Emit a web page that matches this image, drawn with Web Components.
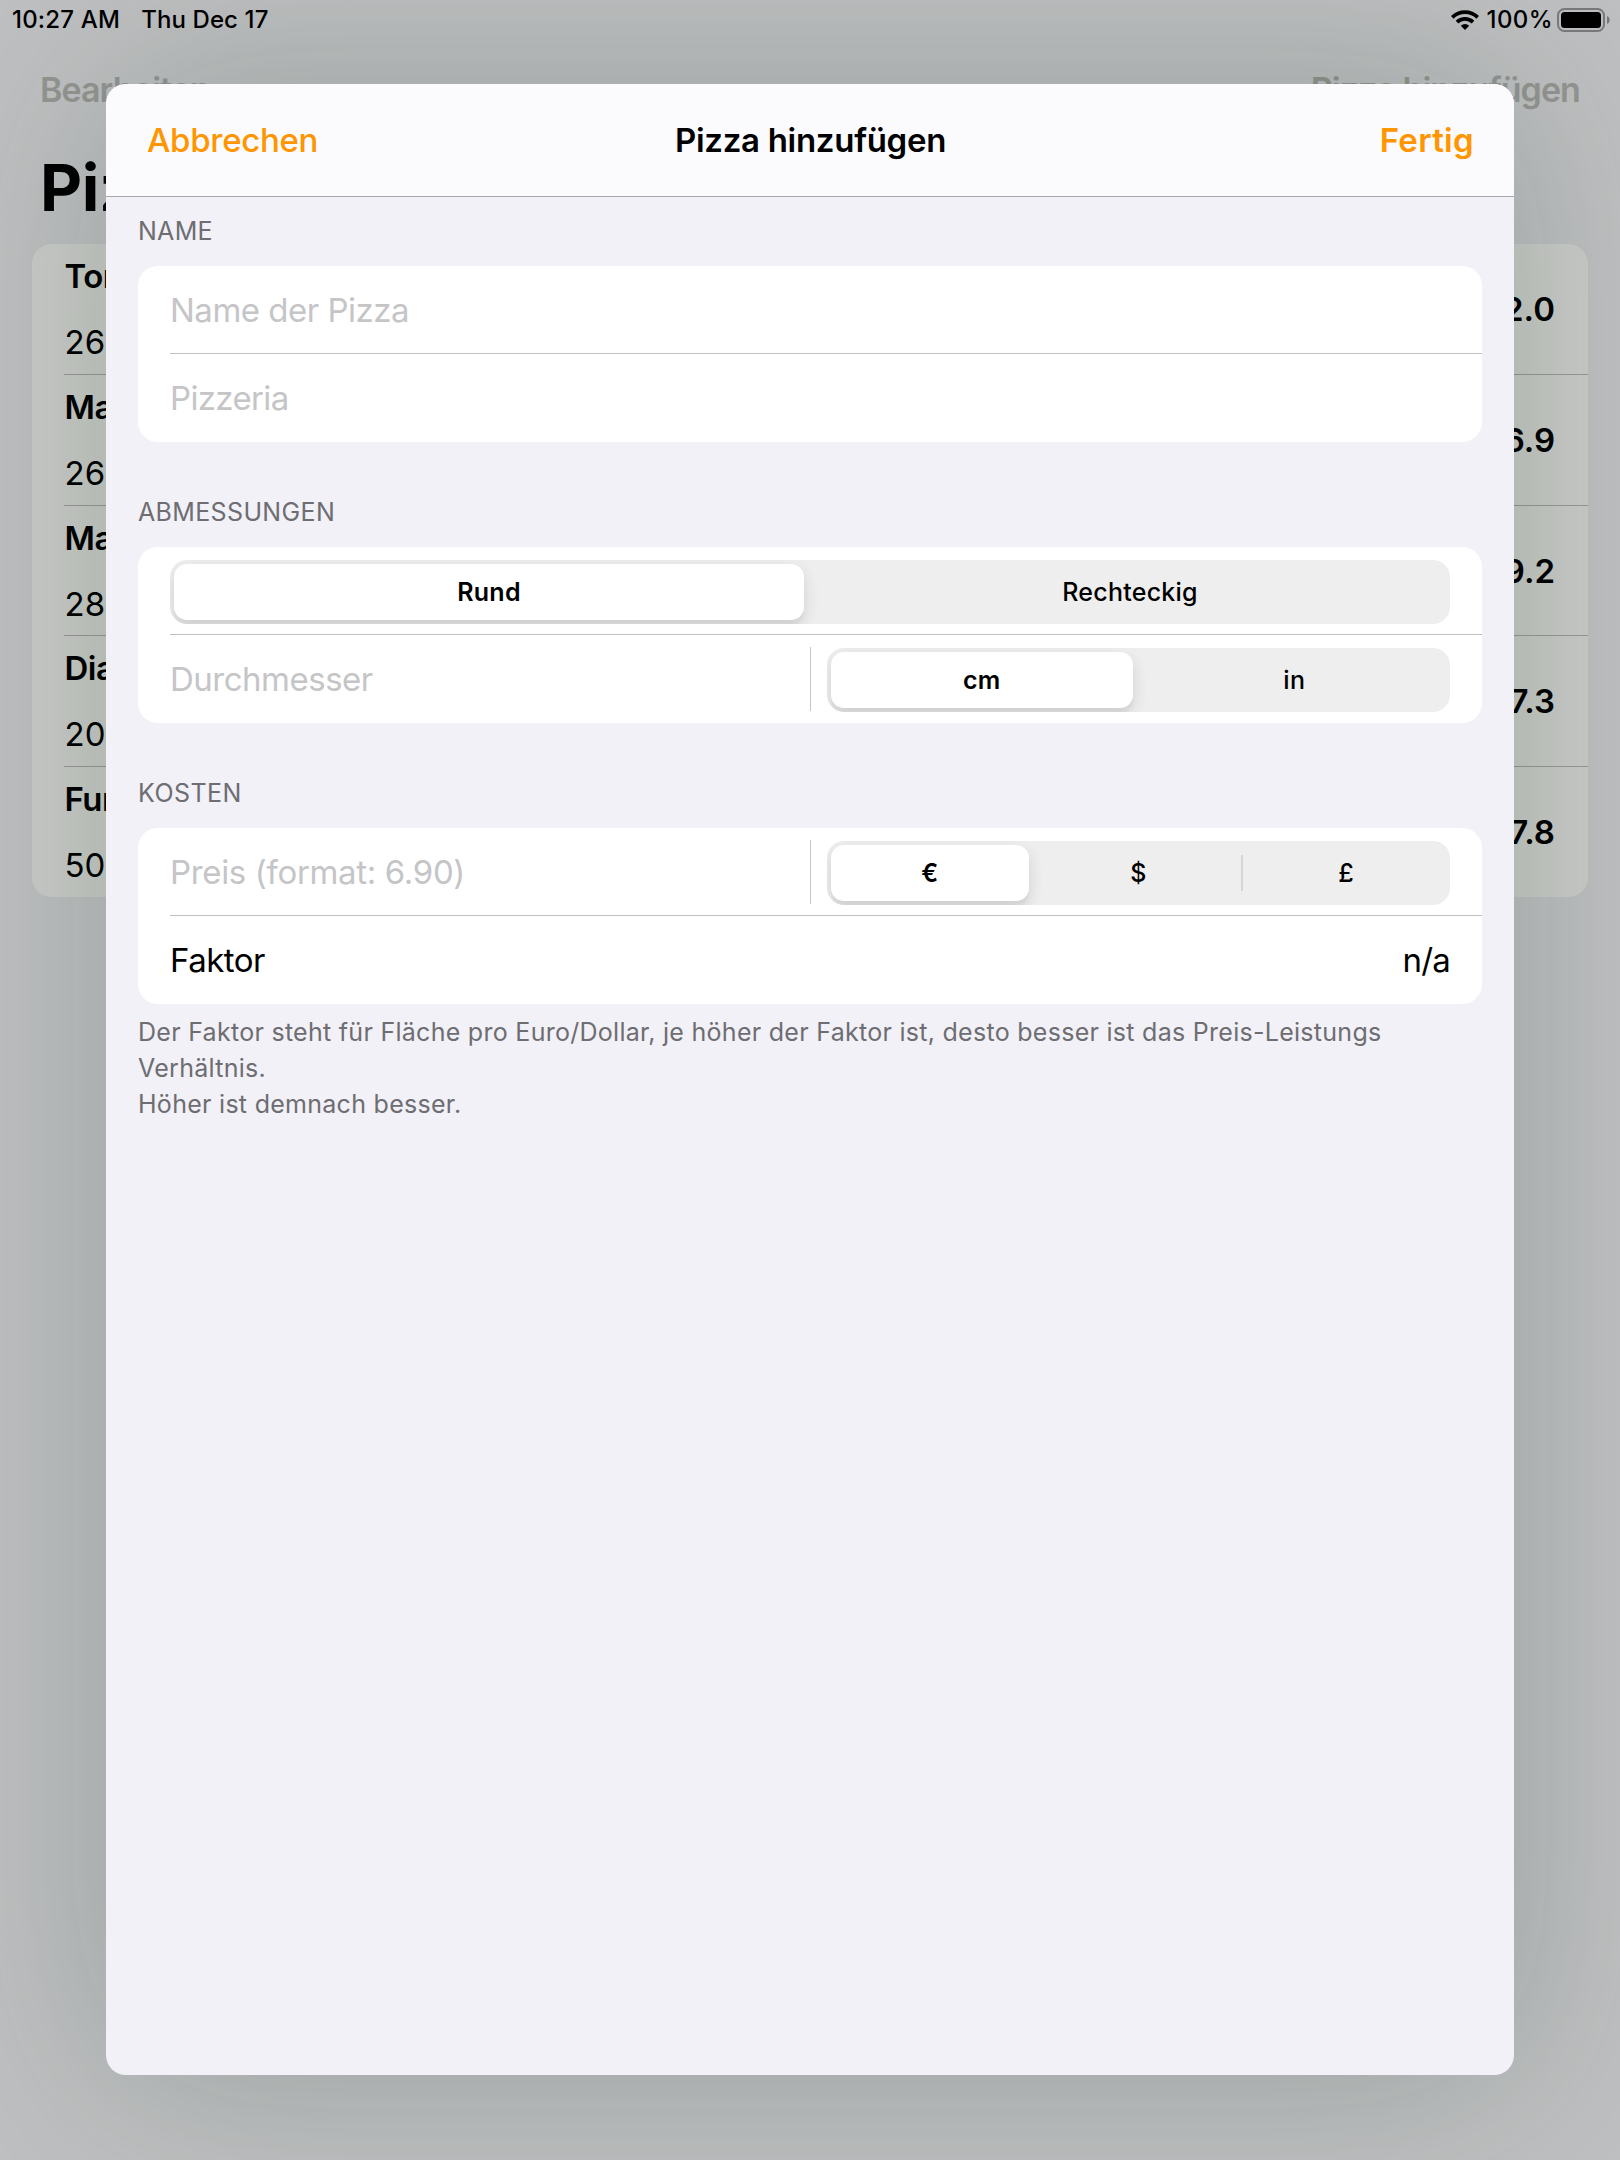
<!DOCTYPE html>
<html lang="de">
<head>
<meta charset="utf-8">
<title>Pizza hinzufügen</title>
<style>
html, body { margin: 0; height: 100%; }
body { font-family: Inter, "Liberation Sans", sans-serif; color: #000; overflow: hidden; }
</style>
</head>
<body>
<pizza-app></pizza-app>
<script>
const define = (name, html) => {
  const tpl = document.createElement('template');
  tpl.innerHTML = html;
  customElements.define(name, class extends HTMLElement {
    constructor() {
      super();
      this.attachShadow({ mode: 'open' }).append(tpl.content.cloneNode(true));
    }
  });
};

define('status-bar', `
<style>
:host { display: flex; align-items: center; height: 39px; padding: 0 10px 0 12px; font-size: 24px; font-weight: 500; line-height: 39px; letter-spacing: .2px; white-space: pre; }
.date { margin-left: 21px; flex: 1; letter-spacing: .1px; }
.wifi { width: 28px; height: 20px; margin-right: 8px; }
.pct { letter-spacing: .4px; }
.bat { width: 53px; height: 24px; margin: 1px 0 0 4px; }
</style>
<span>10:27 AM</span><span class="date">Thu Dec 17</span>
<svg class="wifi" viewBox="0 0 28 20">
  <g fill="none" stroke="#000" stroke-width="3.7">
    <path d="M1.3 7.3a18.2 18.2 0 0 1 25.4 0"/>
    <path d="M6 12.2a11.5 11.5 0 0 1 16 0"/>
  </g>
  <path d="M14 20l-4.2-4.3a6 6 0 0 1 8.4 0z"/>
</svg>
<span class="pct">100%</span>
<svg class="bat" viewBox="0 0 53 24">
  <rect x="1" y="1" width="46" height="22" rx="6.5" fill="none" stroke="#77787a" stroke-width="2"/>
  <rect x="4" y="4" width="40" height="16" rx="3.5"/>
  <path d="M50 8c3.6 1.2 3.6 6.8 0 8z" fill="#77787a"/>
</svg>`);

define('list-row', `
<style>
:host { display: flex; box-sizing: border-box; height: var(--h, 131px); margin-left: 32px; padding-right: 33px; border-bottom: 1px solid var(--line, #999a97); font-size: 33px; justify-content: space-between; align-items: flex-start; }
.t { font-weight: 600; line-height: 65px; letter-spacing: -.5px; padding-left: .5px; }
.s { line-height: 66px; padding-left: .5px; }
.v { font-weight: 600; line-height: 130px; }
</style>
<div><div class="t"><slot></slot></div><div class="s"><slot name="size"></slot></div></div>
<div class="v"><slot name="value"></slot></div>`);

define('pizza-list', `
<style>
:host { display: flow-root; height: 2160px; background: #bfc0c2; }
.nav { display: flex; justify-content: space-between; height: 103px; line-height: 103px; padding: 0 40px; margin-top: 38px; font-size: 34px; font-weight: 600; color: #949592; letter-spacing: -.93px; }
h1 { margin: 0 0 9px; padding-left: 40px; height: 94px; line-height: 94px; font-size: 65px; font-weight: 700; letter-spacing: -.3px; }
.card { margin: 0 32px; border-radius: 20px; background: #cbccc9; }
</style>
<div class="nav"><span>Bearbeiten</span><span>Pizza hinzufügen</span></div>
<h1>Piz</h1>
<div class="card">
  <list-row>Ton<span slot="size">26</span><span slot="value">2.0</span></list-row>
  <list-row>Ma<span slot="size">26</span><span slot="value">6.9</span></list-row>
  <list-row style="--h:130px">Ma<span slot="size">28</span><span slot="value">9.2</span></list-row>
  <list-row>Dia<span slot="size">20</span><span slot="value">7.3</span></list-row>
  <list-row style="--line:transparent;--h:130px">Fun<span slot="size">50</span><span slot="value">7.8</span></list-row>
</div>`);

define('form-section', `
<style>
:host { display: block; margin-bottom: 42px; color: #6d6d72; font-size: 25px; line-height: 36px; letter-spacing: .28px; }
.head { height: 36px; margin-bottom: 17px; }
.card { border-radius: 20px; background: #fff; overflow: hidden; color: #000; }
.foot { padding-top: 10px; }
</style>
<div class="head"><slot name="head"></slot></div>
<div class="card"><slot></slot></div>
<div class="foot"><slot name="foot"></slot></div>`);

define('form-row', `
<style>
:host { display: flex; box-sizing: border-box; height: 88px; margin-left: 32px; padding-right: 32px; gap: 16px; border-bottom: 1px solid #c0c0c2; font-size: 33px; line-height: 88px; letter-spacing: -.5px; align-items: flex-start; justify-content: space-between; }
:host([last]) { border-bottom: 0; }
</style>
<slot></slot>`);

define('place-holder', `
<style>:host { display: block; flex: 1; color: #c5c5c7; }</style><slot></slot>`);

define('v-rule', `
<style>:host { display: block; width: 1px; height: 64px; margin-top: 12px; background: #c6c6c8; }</style>`);

define('seg-control', `
<style>
:host { display: flex; flex: none; width: 623px; height: 64px; margin-top: 13px; border-radius: 17px; background: #eeeeee; overflow: hidden; }
:host([wide]) { width: 1280px; }
::slotted(*) { flex: 1 1 0; }
</style>
<slot></slot>`);

define('seg-item', `
<style>
:host { display: flow-root; height: 64px; text-align: center; font-size: 25px; font-weight: 500; line-height: 64px; letter-spacing: .25px; }
:host([on]) { font-weight: 600; }
:host([on]) div { margin: 4px 6px 4px 4px; background: #fff; border-radius: 13px; line-height: 56px; box-shadow: 0 6px 16px rgba(0,0,0,.12), 0 6px 2px rgba(0,0,0,.03); }
:host([rule]) div { background: linear-gradient(#d5d5d6, #d5d5d6) 0 50% / 2px 36px no-repeat; margin-left: -1px; padding-left: 1px; }
</style>
<div><slot></slot></div>`);

define('modal-sheet', `
<style>
:host { display: block; width: 1408px; height: 1991px; border-radius: 20px; background: #f2f1f7; box-shadow: 0 0 200px rgba(0,40,20,.21); overflow: hidden; }
.nav { display: grid; grid-template-columns: 1fr auto 1fr; align-items: center; box-sizing: border-box; height: 113px; padding: 0 40px 0 41px; background: #fbfbfd; border-bottom: 1px solid #a9a9ad; font-size: 33px; line-height: 40px; font-weight: 600; letter-spacing: -.29px; }
.a { color: #ff9500; font-weight: 500; letter-spacing: -.3px; }
.b { color: #ff9500; text-align: right; letter-spacing: .3px; }
.body { padding: 16px 32px; }
</style>
<div class="nav"><span class="a">Abbrechen</span><span>Pizza hinzufügen</span><span class="b">Fertig</span></div>
<div class="body">
  <form-section>
    <span slot="head">NAME</span>
    <form-row><place-holder>Name der Pizza</place-holder></form-row>
    <form-row last><place-holder style="letter-spacing:-.65px">Pizzeria</place-holder></form-row>
  </form-section>
  <form-section>
    <span slot="head" style="letter-spacing:.35px">ABMESSUNGEN</span>
    <form-row><seg-control wide><seg-item on>Rund</seg-item><seg-item>Rechteckig</seg-item></seg-control></form-row>
    <form-row last><place-holder>Durchmesser</place-holder><v-rule></v-rule><seg-control><seg-item on>cm</seg-item><seg-item>in</seg-item></seg-control></form-row>
  </form-section>
  <form-section>
    <span slot="head" style="letter-spacing:.45px">KOSTEN</span>
    <form-row><place-holder style="letter-spacing:-.34px">Preis (format: 6.90)</place-holder><v-rule></v-rule><seg-control><seg-item on>€</seg-item><seg-item>$</seg-item><seg-item rule>£</seg-item></seg-control></form-row>
    <form-row last><span style="letter-spacing:-.5px">Faktor</span><span style="letter-spacing:-.8px">n/a</span></form-row>
    <span slot="foot">Der Faktor steht für Fläche pro Euro/Dollar, je höher der Faktor ist, desto besser ist das Preis-Leistungs Verhältnis.<br>Höher ist demnach besser.</span>
  </form-section>
</div>`);

define('pizza-app', `
<style>
:host { display: block; position: relative; width: 1620px; height: 2160px; overflow: hidden; }
modal-sheet { position: absolute; left: 106px; top: 84px; }
status-bar { position: absolute; left: 0; right: 0; top: 0; }
</style>
<pizza-list></pizza-list>
<modal-sheet></modal-sheet>
<status-bar></status-bar>`);
</script>
</body>
</html>
